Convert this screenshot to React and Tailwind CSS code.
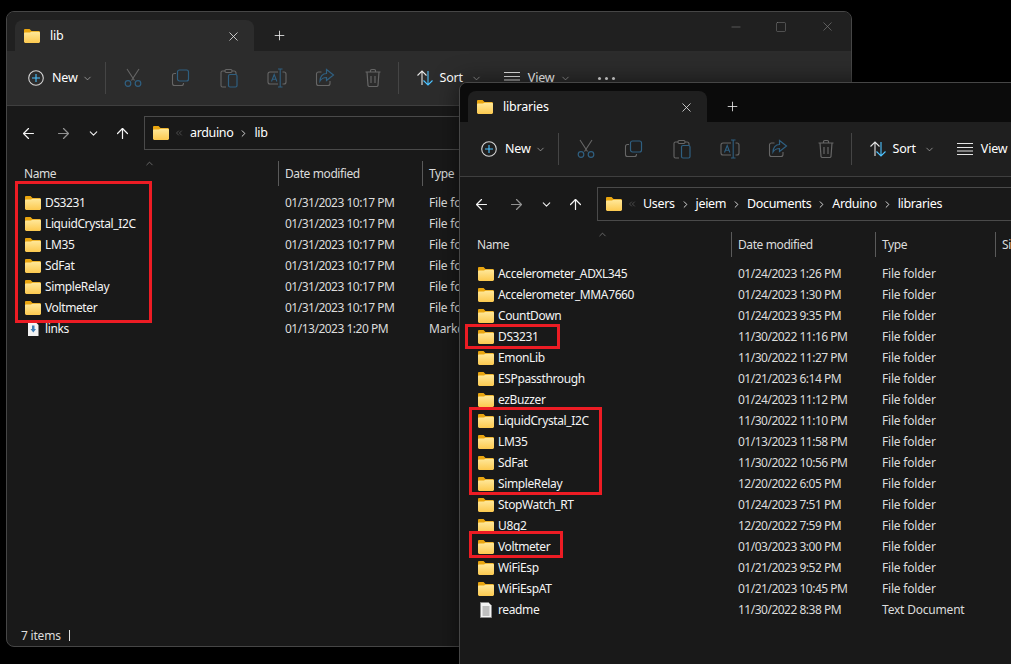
import React from 'react'
import { ArrowLeft, ArrowRight, ArrowUp, ChevronDown, ChevronRight, ChevronUp, ChevronsLeft, Minus, Plus, Square, X } from 'lucide-react'

const GREY = '#666666'
const BLUE = '#2f5f80'

const libFiles = [
  ['DS3231', '01/31/2023 10:17 PM', 'File folder'],
  ['LiquidCrystal_I2C', '01/31/2023 10:17 PM', 'File folder'],
  ['LM35', '01/31/2023 10:17 PM', 'File folder'],
  ['SdFat', '01/31/2023 10:17 PM', 'File folder'],
  ['SimpleRelay', '01/31/2023 10:17 PM', 'File folder'],
  ['Voltmeter', '01/31/2023 10:17 PM', 'File folder'],
  ['links', '01/13/2023 1:20 PM', 'Markdown File', 'md'],
]

const librariesFiles = [
  ['Accelerometer_ADXL345', '01/24/2023 1:26 PM', 'File folder'],
  ['Accelerometer_MMA7660', '01/24/2023 1:30 PM', 'File folder'],
  ['CountDown', '01/24/2023 9:35 PM', 'File folder'],
  ['DS3231', '11/30/2022 11:16 PM', 'File folder'],
  ['EmonLib', '11/30/2022 11:27 PM', 'File folder'],
  ['ESPpassthrough', '01/21/2023 6:14 PM', 'File folder'],
  ['ezBuzzer', '01/24/2023 11:12 PM', 'File folder'],
  ['LiquidCrystal_I2C', '11/30/2022 11:10 PM', 'File folder'],
  ['LM35', '01/13/2023 11:58 PM', 'File folder'],
  ['SdFat', '11/30/2022 10:56 PM', 'File folder'],
  ['SimpleRelay', '12/20/2022 6:05 PM', 'File folder'],
  ['StopWatch_RT', '01/24/2023 7:51 PM', 'File folder'],
  ['U8q2', '12/20/2022 7:59 PM', 'File folder'],
  ['Voltmeter', '01/03/2023 3:00 PM', 'File folder'],
  ['WiFiEsp', '01/21/2023 9:52 PM', 'File folder'],
  ['WiFiEspAT', '01/21/2023 10:45 PM', 'File folder'],
  ['readme', '11/30/2022 8:38 PM', 'Text Document', 'txt'],
]

const FolderIcon = () => (
  <svg width="16" height="14" viewBox="0 0 17 14" preserveAspectRatio="none" className="shrink-0">
    <defs>
      <linearGradient id="folderFront" x1="0" y1="0" x2="0" y2="1">
        <stop offset="0" stopColor="#ffe89a" />
        <stop offset="1" stopColor="#fcc94f" />
      </linearGradient>
    </defs>
    <path d="M0 1.2C0 .5.5 0 1.2 0h4.2c.4 0 .7.1 1 .4L8 2h7.6c.8 0 1.4.6 1.4 1.4V6H0z" fill="#e9a50f" />
    <path d="M0 4.6C0 4 .5 3.6 1.1 3.5L6.3 3.4 8 2.700h7.700c.7 0 1.300.6 1.300 1.300v8.600c0 .8-.6 1.400-1.400 1.400H1.400C.6 14 0 13.400 0 12.600z" fill="url(#folderFront)" />
  </svg>
)

const MdIcon = () => (
  <svg width="16" height="16" viewBox="0 0 16 16" className="shrink-0">
    <path d="M3 1h7.500l3 3v11H3z" fill="#f2f2f2" />
    <path d="M7 4.500h2.500V8H11l-2.700 3.500L5.500 8H7z" fill="#3f7fb5" />
  </svg>
)

const TxtIcon = () => (
  <svg width="16" height="16" viewBox="0 0 16 16" className="shrink-0">
    <path d="M2.500.5h8l3 3v12h-11z" fill="#f4f4f4" stroke="#8a8a8a" />
    <path d="M4.500 5h7M4.500 7h7M4.500 9h7M4.500 11h7M4.500 13h7" stroke="#8a8a8a" />
  </svg>
)

const NewIcon = () => (
  <svg width="18" height="18" viewBox="0 0 18 18" fill="none">
    <circle cx="9" cy="9" r="7.300" stroke="#d4d4d4" strokeWidth="1.100" />
    <path d="M9 5v8M5 9h8" stroke="#4cc2ff" strokeWidth="1.100" />
  </svg>
)

const CutIcon = () => (
  <svg width="20" height="20" viewBox="0 0 20 20" fill="none">
    <path d="M4 1l7.500 11.500M16 1L8.500 12.500" stroke={GREY} strokeWidth="1.100" />
    <circle cx="5" cy="15.500" r="2.800" stroke={BLUE} strokeWidth="1.200" />
    <circle cx="15" cy="15.500" r="2.800" stroke={BLUE} strokeWidth="1.200" />
  </svg>
)

const CopyIcon = () => (
  <svg width="20" height="20" viewBox="0 0 20 20" fill="none">
    <path d="M5 5.500H3.500A2 2 0 0 0 1.500 7.500v8a2 2 0 0 0 2 2h7a2 2 0 0 0 2-2V15" stroke={GREY} strokeWidth="1.100" />
    <rect x="6.500" y="2" width="11" height="11" rx="2" stroke={BLUE} strokeWidth="1.200" />
  </svg>
)

const PasteIcon = () => (
  <svg width="20" height="20" viewBox="0 0 20 20" fill="none">
    <path d="M6 3H3.500a1.500 1.500 0 0 0-1.500 1.500v13A1.500 1.500 0 0 0 3.500 19H7M13 3h2a2 2 0 0 1 2 2v1.500" stroke={GREY} strokeWidth="1.100" />
    <rect x="6" y="1.500" width="7" height="3" rx="1.200" stroke={GREY} strokeWidth="1.100" />
    <rect x="9.500" y="6.500" width="8.500" height="12.500" rx="1.500" stroke={BLUE} strokeWidth="1.200" />
  </svg>
)

const RenameIcon = () => (
  <svg width="20" height="20" viewBox="0 0 20 20" fill="none">
    <path d="M11 4H3a2 2 0 0 0-2 2v8a2 2 0 0 0 2 2h8M15.500 4H17a2 2 0 0 1 2 2v8a2 2 0 0 1-2 2h-1.500" stroke={GREY} strokeWidth="1.100" />
    <path d="M11 1h4.500M13.200 1v18M11 19h4.500" stroke={BLUE} strokeWidth="1.100" />
    <path d="M4.500 13.500L7.200 6.500l2.700 7M5.500 11.200h3.500" stroke={BLUE} strokeWidth="1.100" />
  </svg>
)

const ShareIcon = () => (
  <svg width="20" height="20" viewBox="0 0 20 20" fill="none">
    <path d="M6.500 4H3.500a2 2 0 0 0-2 2v9.500a2 2 0 0 0 2 2h9.500a2 2 0 0 0 2-2V13" stroke={GREY} strokeWidth="1.100" />
    <path d="M11.500 1.500l7 5.500-7 5.500V9.500C8.500 9.500 6.500 10.500 5 13c0-4.500 2.500-7.500 6.500-7.500z" stroke={BLUE} strokeWidth="1.200" />
  </svg>
)

const TrashIcon = () => (
  <svg width="20" height="20" viewBox="0 0 20 20" fill="none" stroke={GREY} strokeWidth="1.200">
    <path d="M2.500 4h15M7.500 4V2.700A1.200 1.200 0 0 1 8.700 1.500h2.600a1.200 1.200 0 0 1 1.200 1.200V4" />
    <path d="M4 4l1 13.500a1.500 1.500 0 0 0 1.500 1h7a1.500 1.500 0 0 0 1.500-1L16 4" />
    <path d="M8 8v7M12 8v7" />
  </svg>
)

const SortIcon = () => (
  <svg width="18" height="18" viewBox="0 0 18 18" fill="none" strokeWidth="1.100">
    <path d="M6 16V2M1.500 6.500L6 2l4.500 4.500" stroke="#e4e4e4" />
    <path d="M12 2v14M7.500 11.500L12 16l4.500-4.500" stroke="#4cc2ff" />
  </svg>
)

const ViewIcon = () => (
  <svg width="16" height="12" viewBox="0 0 16 12" fill="none" stroke="#e4e4e4">
    <path d="M0 .5h16M0 4.500h16M0 8h16M0 11.500h16" />
  </svg>
)

const Divider = ({ className = '' }) => <div className={`w-px h-[32px] bg-[#454545] ${className}`} />

const ToolButton = ({ children }) => <div className="w-[48px] flex items-center justify-center">{children}</div>

const FileRow = ({ file }) => {
  const [name, date, type, kind] = file
  return (
    <div className="flex items-center h-[21px]">
      <div className="w-[271px] flex items-center gap-[4px] pl-[18px] pr-2">
        {kind === 'md' ? <MdIcon /> : kind === 'txt' ? <TxtIcon /> : <FolderIcon />}
        <span className="text-[#f4f4f4] whitespace-nowrap tracking-[-0.38px]">{name}</span>
      </div>
      <div className="w-[144px] pl-[7px] text-[#dcdcdc] whitespace-nowrap tracking-[-0.5px]">{date}</div>
      <div className="w-[120px] pl-[7px] text-[#dcdcdc] whitespace-nowrap">{type}</div>
    </div>
  )
}

const Explorer = ({ title, path, files, count, className, stripBg, tabBg, toolBg, showControls }) => (
  <div className={`absolute flex flex-col overflow-hidden rounded-lg border border-[#464646] bg-[#191919] text-[12px] text-white shadow-[0_0_24px_rgba(0,0,0,0.55)] ${className}`}>
    {/* tab strip */}
    <div className={`flex items-end h-[39px] pl-[8px] shrink-0 ${stripBg}`}>
      <div className={`flex items-center w-[239px] h-[31px] rounded-t-lg pl-[9px] pr-[13px] pt-[1px] ${tabBg}`}>
        <FolderIcon />
        <span className="ml-[10px] text-[12.500px]">{title}</span>
        <X size={15} strokeWidth={1.300} className="ml-auto text-[#e6e6e6]" />
      </div>
      <div className="flex items-center h-[31px] ml-[18px]">
        <Plus size={15} strokeWidth={1.300} className="text-[#f0f0f0]" />
      </div>
      {showControls && (
        <div className="ml-auto flex items-center self-start h-[29px] text-[#808080]">
          <Minus size={14} strokeWidth={1} className="mr-[32px]" />
          <Square size={12} strokeWidth={1} className="mr-[33px]" />
          <X size={15} strokeWidth={1} className="mr-[16px]" />
        </div>
      )}
    </div>

    {/* toolbar */}
    <div className={`flex items-center h-[55px] shrink-0 border-b border-[#3f3f3f] ${toolBg}`}>
      <div className="ml-[20px]"><NewIcon /></div>
      <span className="ml-[7px] text-[12.500px]">New</span>
      <ChevronDown size={11} strokeWidth={1.500} className="ml-[4px] text-[#b8b8b8]" />
      <Divider className="ml-[12px]" />
      <div className="ml-[3px] flex">
        <ToolButton><CutIcon /></ToolButton>
        <ToolButton><CopyIcon /></ToolButton>
        <ToolButton><PasteIcon /></ToolButton>
        <ToolButton><RenameIcon /></ToolButton>
        <ToolButton><ShareIcon /></ToolButton>
        <ToolButton><TrashIcon /></ToolButton>
      </div>
      <Divider className="ml-[1px]" />
      <div className="ml-[17px]"><SortIcon /></div>
      <span className="ml-[6px] text-[12.500px]">Sort</span>
      <ChevronDown size={11} strokeWidth={1.500} className="ml-[8px] text-[#b8b8b8]" />
      <div className="ml-[22px]"><ViewIcon /></div>
      <span className="ml-[8px] text-[12.500px]">View</span>
      <ChevronDown size={11} strokeWidth={1.500} className="ml-[6px] text-[#b8b8b8]" />
      <span className="ml-[27px] flex gap-[4px]">
        <i className="w-[3px] h-[3px] rounded-full bg-[#e4e4e4]" />
        <i className="w-[3px] h-[3px] rounded-full bg-[#e4e4e4]" />
        <i className="w-[3px] h-[3px] rounded-full bg-[#e4e4e4]" />
      </span>
    </div>

    {/* navigation row */}
    <div className="flex items-center h-[34px] mt-[10px] shrink-0">
      <ArrowLeft size={17} strokeWidth={1.700} className="ml-[13px] text-[#f4f4f4]" />
      <ArrowRight size={17} strokeWidth={1.700} className="ml-[18px] text-[#929292]" />
      <ChevronDown size={13} strokeWidth={2} className="ml-[15px] text-[#ececec]" />
      <ArrowUp size={17} strokeWidth={1.700} className="ml-[14px] text-[#f4f4f4]" />
      <div className="flex items-center h-full ml-[13px] mr-[14px] flex-1 border border-[#4a4a4a] pl-[8px] tracking-[-0.35px]">
        <FolderIcon />
        <ChevronsLeft size={10} strokeWidth={1.300} className="ml-[5px] text-[#777777]" />
        {path.map((part, i) => (
          <React.Fragment key={part}>
            {i > 0 && <ChevronRight size={11} strokeWidth={2} className="mx-[5px] text-[#e6e6e6]" />}
            <span className={`text-[12.500px] ${i === 0 ? 'ml-[6px]' : ''}`}>{part}</span>
          </React.Fragment>
        ))}
      </div>
    </div>

    {/* column header */}
    <div className="flex h-[25px] mt-[11px] shrink-0 text-[#dcdcdc] tracking-[-0.4px]">
      <div className="w-[271px] pl-[17px] flex items-center">
        <span>Name</span>
        <ChevronUp size={11} strokeWidth={1.300} className="ml-[88px] -mt-[21px] text-[#9a9a9a]" />
      </div>
      <div className="w-[144px] pl-[6px] flex items-center border-l border-[#5a5a5a]">Date modified</div>
      <div className="w-[120px] pl-[6px] flex items-center border-l border-[#5a5a5a]">Type</div>
      <div className="pl-[6px] flex items-center border-l border-[#5a5a5a]">Size</div>
    </div>

    {/* file list */}
    <div className="flex-1 pt-[6px]">
      {files.map(f => <FileRow key={f[0]} file={f} />)}
    </div>

    {/* status bar */}
    {count && (
      <div className="flex items-center h-[24px] shrink-0 pl-[14px] pt-[3px] text-[#dcdcdc]">
        <span>{count}</span>
        <span className="ml-[8px] w-px h-[11px] bg-[#e0e0e0]" />
      </div>
    )}
  </div>
)

const RedBox = ({ className }) => <div className={`absolute z-20 border-[3px] border-[#ed1c24] ${className}`} />

export default function App() {
  return (
    <div className="relative w-[1011px] h-[664px] overflow-hidden bg-black font-['Noto_Sans',sans-serif] tracking-[-0.2px]">
      <Explorer
        title="lib"
        path={['arduino', 'lib']}
        files={libFiles}
        count="7 items"
        className="left-[6px] top-[11px] w-[846px] h-[636px]"
        stripBg="bg-[#202020]"
        tabBg="bg-[#2c2c2c]"
        toolBg="bg-[#2c2c2c]"
        showControls
      />
      <Explorer
        title="libraries"
        path={['Users', 'jeiem', 'Documents', 'Arduino', 'libraries']}
        files={librariesFiles}
        className="z-10 left-[459px] top-[82px] w-[846px] h-[636px]"
        stripBg="bg-[#0b0b0b]"
        tabBg="bg-[#1f1f1f]"
        toolBg="bg-[#1f1f1f]"
      />
      <RedBox className="left-[15px] top-[181px] w-[137px] h-[142px]" />
      <RedBox className="left-[465px] top-[324px] w-[95px] h-[25px]" />
      <RedBox className="left-[469px] top-[407px] w-[133px] h-[88px]" />
      <RedBox className="left-[469px] top-[531px] w-[94px] h-[27px]" />
    </div>
  )
}
